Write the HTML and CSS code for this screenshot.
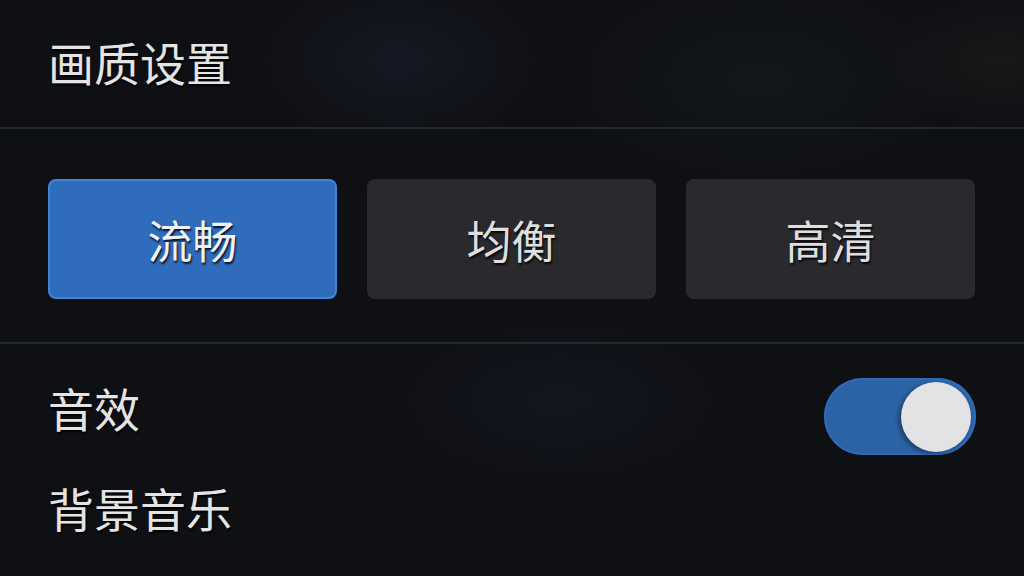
FILE: index.html
```html
<!DOCTYPE html>
<html>
  <head>
    <meta charset="utf-8">
    <title>画质设置</title>
    <link rel="stylesheet" href="styles.css">
  </head>

  <body>
    <div id="settings">
      <div class="section-head">
        <h1 class="section-title">画质设置</h1>
      </div>

      <hr class="divider">

      <div id="quality-options">
        <button class="quality-button active" type="button">流畅</button>
        <button class="quality-button" type="button">均衡</button>
        <button class="quality-button" type="button">高清</button>
      </div>

      <hr class="divider">

      <div class="setting-row sound-row">
        <span class="setting-label">音效</span>
        <span class="toggle on"><span class="toggle-knob"></span></span>
      </div>

      <div class="setting-row music-row">
        <span class="setting-label">背景音乐</span>
      </div>
    </div>
  </body>
</html>
```

FILE: styles.css
```css
* {
  box-sizing: border-box;
}

html,
body {
  height: 100%;
}

body {
  margin: 0;
  overflow: hidden;
  color: #e4e4e4;
  font-family: "Noto Sans CJK SC", "Noto Sans", sans-serif;
  background-color: #0f1014;
  background-image:
    radial-gradient(ellipse 150px 90px at 400px 60px, rgba(40, 50, 80, 0.25), transparent),
    radial-gradient(ellipse 200px 110px at 760px 80px, rgba(30, 45, 40, 0.25), transparent),
    radial-gradient(ellipse 180px 90px at 560px 400px, rgba(30, 40, 65, 0.25), transparent),
    radial-gradient(ellipse 120px 70px at 1000px 60px, rgba(60, 55, 45, 0.2), transparent);
}

#settings {
  width: 100%;
}

.section-head {
  height: 127px;
  padding: 0 48px 6px;
  display: flex;
  align-items: center;
}

.section-title {
  margin: 0;
  font-size: 46px;
  font-weight: 400;
  line-height: 1;
  text-shadow: 1px 2px 2px rgba(0, 0, 0, 0.85);
}

.divider {
  margin: 0;
  border: none;
  height: 2px;
  background: #24272d;
}

#quality-options {
  display: grid;
  grid-template-columns: repeat(3, 289px);
  gap: 30px;
  padding: 50px 48px 43px;
}

.quality-button {
  height: 120px;
  border: 2px solid transparent;
  border-radius: 8px;
  background: #2a2a2e;
  color: #dedede;
  font-family: inherit;
  font-size: 45px;
  line-height: 1;
  padding: 0;
  text-shadow: 1px 2px 2px rgba(0, 0, 0, 0.85);
  cursor: pointer;
}

.quality-button.active {
  background: #2f6cbc;
  border-color: #4285d6;
  color: #eef2f8;
}

.setting-row {
  display: flex;
  align-items: center;
  justify-content: space-between;
  padding: 0 48px;
}

.sound-row {
  height: 111px;
  padding-top: 34px;
}

.music-row {
  height: 104px;
}

.setting-label {
  font-size: 46px;
  line-height: 1;
  text-shadow: 1px 2px 2px rgba(0, 0, 0, 0.85);
}

.sound-row .setting-label {
  margin-bottom: 20px;
}

.toggle {
  width: 152px;
  height: 77px;
  border-radius: 39px;
  background: #2c63a6;
  display: flex;
  align-items: center;
  justify-content: flex-end;
  padding: 0 5px;
  box-shadow: inset 0 0 0 2px #2f6ab3;
}

.toggle-knob {
  width: 70px;
  height: 70px;
  border-radius: 50%;
  background: #e3e3e5;
  box-shadow: -3px 2px 4px rgba(0, 0, 0, 0.35);
}
```
